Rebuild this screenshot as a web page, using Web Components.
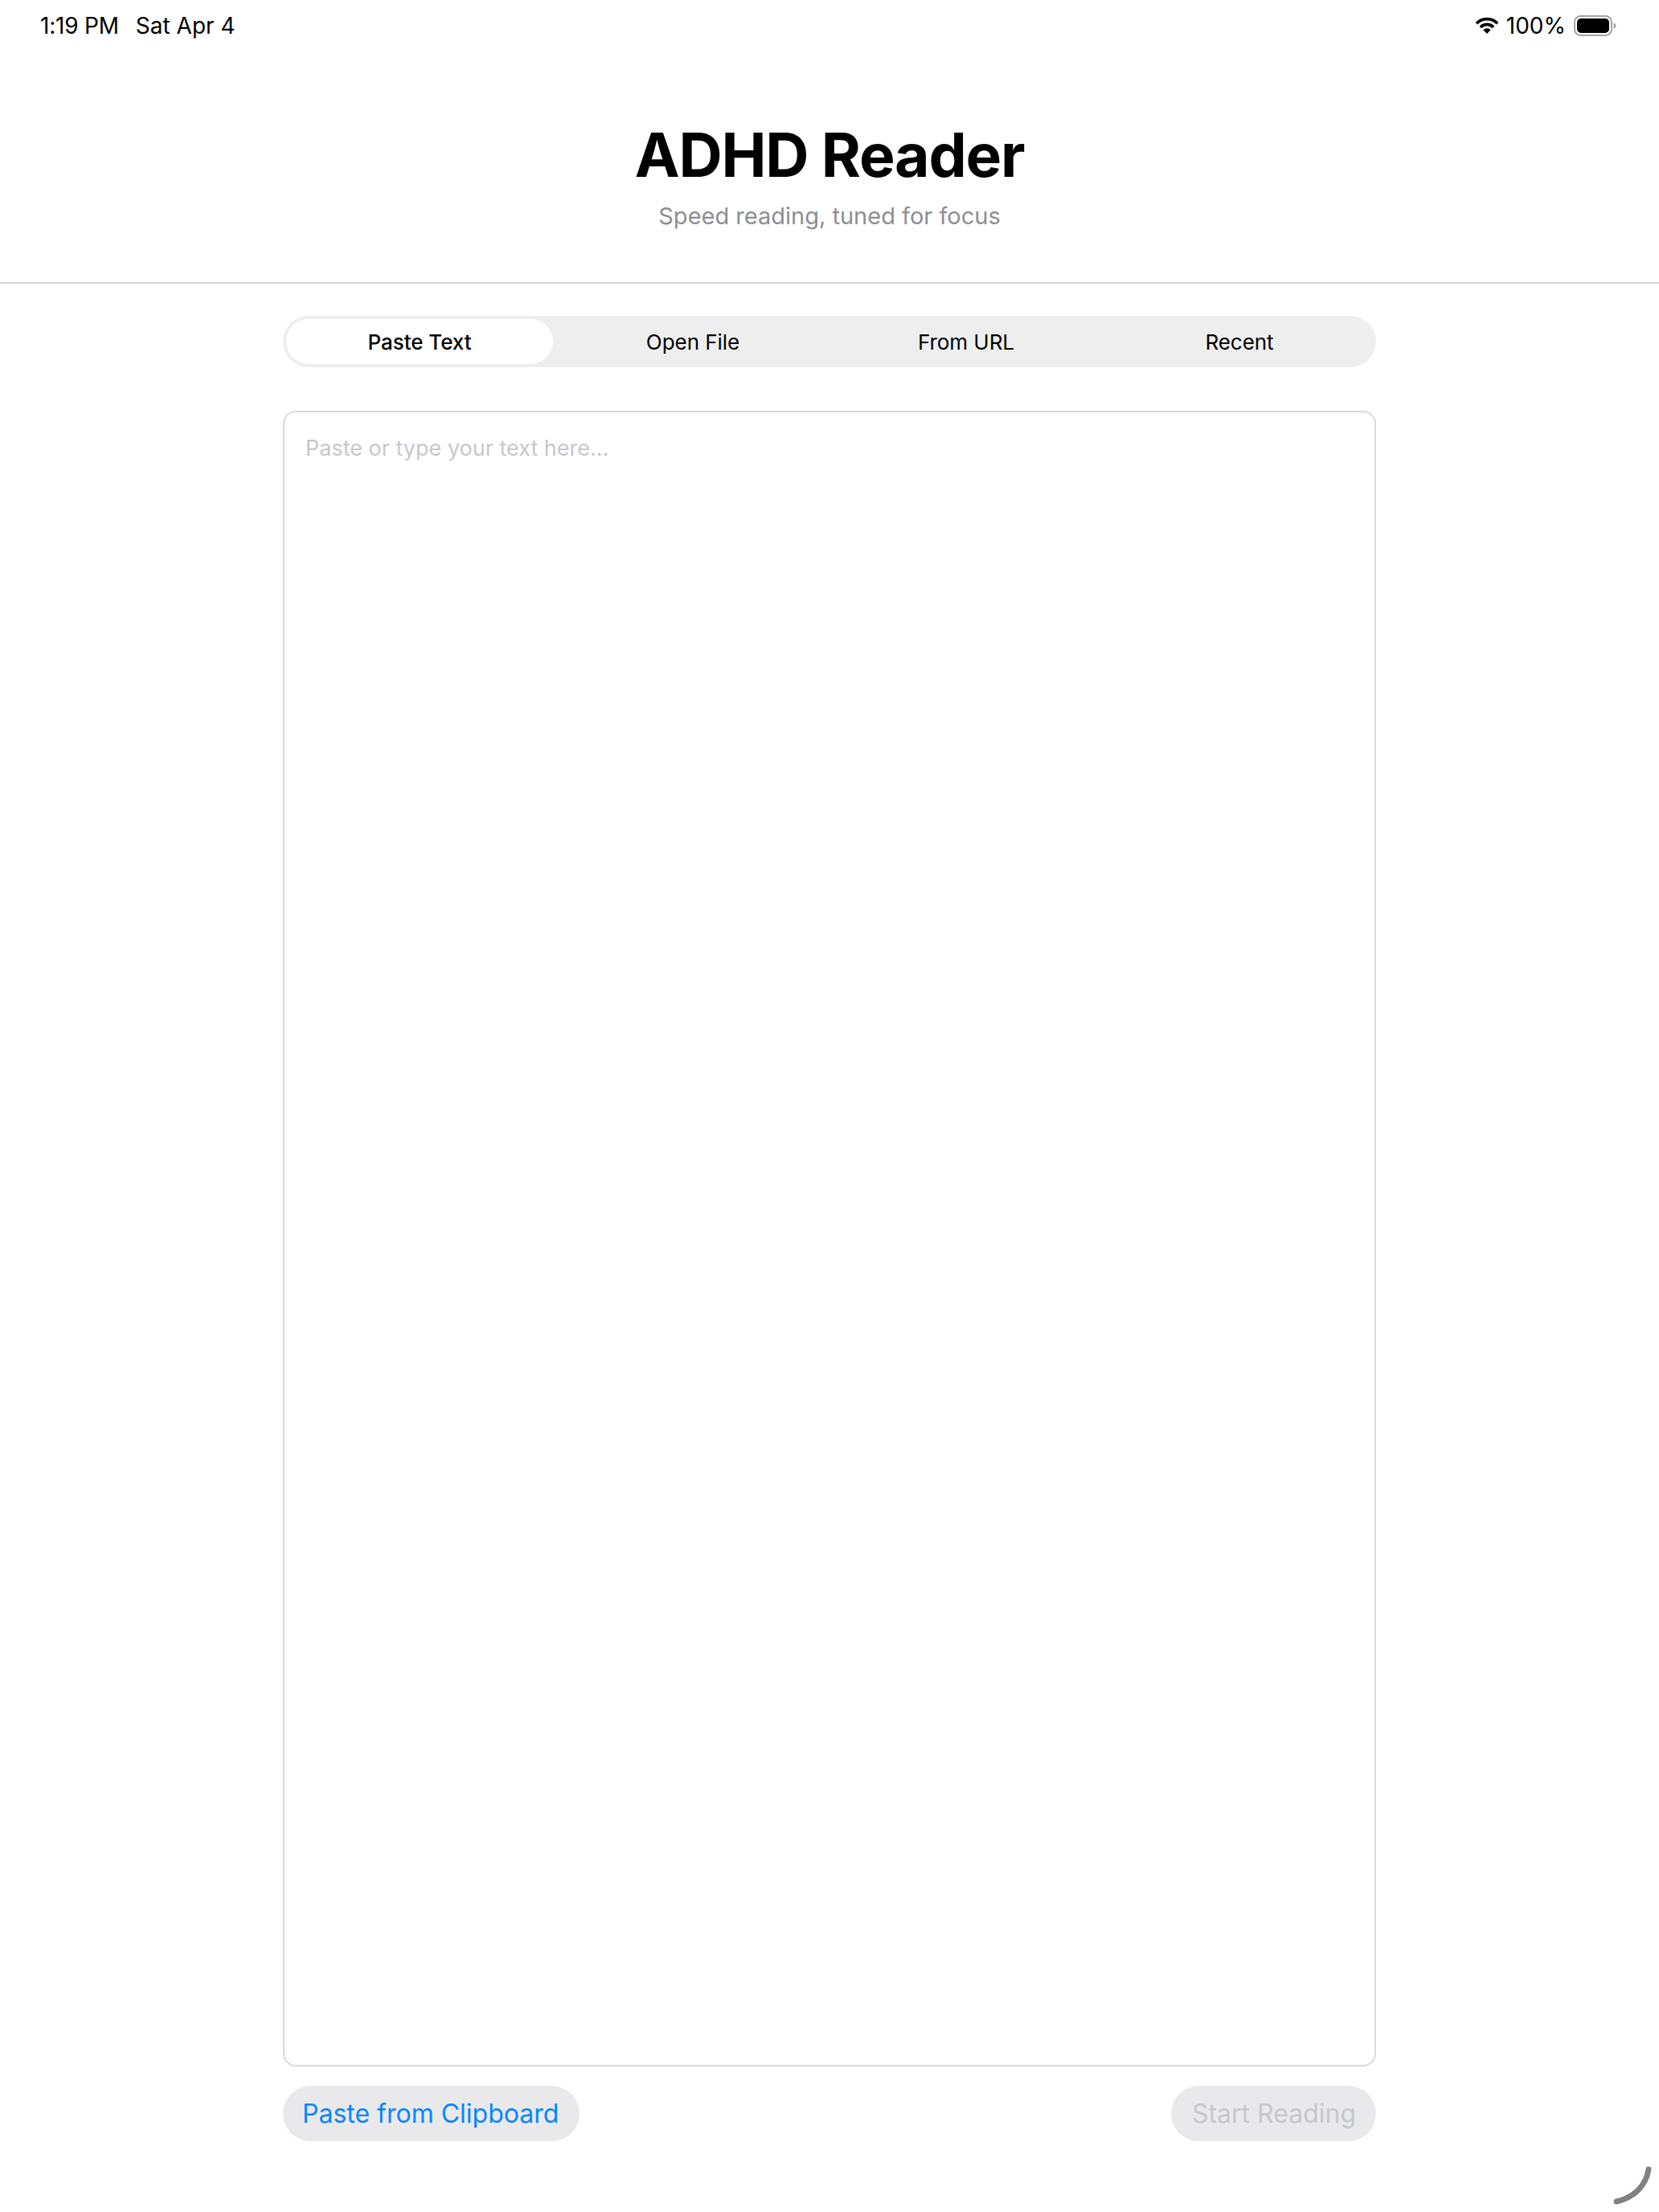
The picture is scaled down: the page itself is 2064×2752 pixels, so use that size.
<!DOCTYPE html>
<html>
<head>
<meta charset="utf-8">
<title>ADHD Reader</title>
<style>
  html, body { margin: 0; padding: 0; background: #fff; }
  body { width: 2064px; height: 2752px; overflow: hidden; font-family: Inter, "Liberation Sans", sans-serif; color: #000; }
</style>
</head>
<body>
<reader-app>
  <status-bar time="1:19 PM" date="Sat Apr 4" battery="100%"></status-bar>
  <app-header heading="ADHD Reader">Speed reading, tuned for focus</app-header>
  <reader-content>
    <tab-bar>
      <tab-item selected>Paste Text</tab-item>
      <tab-item>Open File</tab-item>
      <tab-item>From URL</tab-item>
      <tab-item>Recent</tab-item>
    </tab-bar>
    <text-box>Paste or type your text here...</text-box>
    <action-row>
      <pill-button>Paste from Clipboard</pill-button>
      <pill-button disabled>Start Reading</pill-button>
    </action-row>
  </reader-content>
  <corner-grip></corner-grip>
</reader-app>

<script>
class ReaderApp extends HTMLElement {
  constructor() {
    super();
    this.attachShadow({ mode: 'open' });
    this.shadowRoot.innerHTML = `
      <style>
        :host { display: flex; flex-direction: column; position: relative; width: 2064px; height: 2752px; }
      </style>
      <slot></slot>`;
  }
}

class StatusBar extends HTMLElement {
  constructor() {
    super();
    this.attachShadow({ mode: 'open' });
  }

  connectedCallback() {
    this.shadowRoot.innerHTML = `
      <style>
        :host { display: flex; justify-content: space-between; align-items: center; height: 64px; padding: 0 52px 0 50px; font-size: 28px; }
        .side { display: flex; align-items: center; }
        .time { letter-spacing: -0.2px; }
        .date { margin-left: 21px; }
        .pct { margin: 0 10px 0 8px; }
        svg { display: block; }
      </style>
      <div class="side">
        <span class="time">${this.getAttribute('time')}</span>
        <span class="date">${this.getAttribute('date')}</span>
      </div>
      <div class="side">
        <svg width="32" height="22" viewBox="0 0 30 21">
          <path d="M2.57 7.9A17 17 0 0 1 27.43 7.9M7.32 12.34A10.5 10.5 0 0 1 22.68 12.34" fill="none" stroke="#000" stroke-width="3.6"/>
          <path d="M15 20 10.61 15.41A6 6 0 0 1 19.39 15.41Z" fill="#000"/>
        </svg>
        <span class="pct">${this.getAttribute('battery')}</span>
        <svg width="54" height="26" viewBox="0 0 54 26">
          <rect x="1" y="1" width="46" height="24" rx="7.5" fill="none" stroke="#a3a3a3" stroke-width="2"/>
          <rect x="4" y="4" width="40" height="18" rx="5" fill="#000"/>
          <path d="M49.5 9.5C51.5 10 52.5 11.4 52.5 13S51.5 16 49.5 16.500Z" fill="#a3a3a3"/>
        </svg>
      </div>`;
  }
}

class AppHeader extends HTMLElement {
  constructor() {
    super();
    this.attachShadow({ mode: 'open' });
  }

  connectedCallback() {
    this.shadowRoot.innerHTML = `
      <style>
        :host { display: flex; flex-direction: column; align-items: center; height: 287px; border-bottom: 2px solid #d6d6d8; }
        h1 { margin: 89px 0 0; font-size: 75px; line-height: 80px; font-weight: 700; letter-spacing: -1.2px; color: #000; }
        p { margin: 16px 0 0; font-size: 29px; line-height: 40px; color: #8e8e93; }
      </style>
      <h1>${this.getAttribute('heading')}</h1>
      <p><slot></slot></p>`;
  }
}

class ReaderContent extends HTMLElement {
  constructor() {
    super();
    this.attachShadow({ mode: 'open' });
    this.shadowRoot.innerHTML = `
      <style>
        :host { display: flex; flex-direction: column; width: 1360px; margin: 0 auto; padding-top: 40px; }
      </style>
      <slot></slot>`;
  }
}

class TabBar extends HTMLElement {
  constructor() {
    super();
    this.attachShadow({ mode: 'open' });
    this.shadowRoot.innerHTML = `
      <style>
        :host { display: grid; grid-template-columns: repeat(4, 1fr); height: 64px; border-radius: 32px; background: #eeeeef; }
      </style>
      <slot></slot>`;
  }
}

class TabItem extends HTMLElement {
  constructor() {
    super();
    this.attachShadow({ mode: 'open' });
    this.shadowRoot.innerHTML = `
      <style>
        :host { display: flex; align-items: center; justify-content: center; margin: 4px; border-radius: 28px; font-size: 26px; letter-spacing: -0.05px; color: #000; }
        :host([selected]) { background: #fff; font-weight: 500; }
      </style>
      <slot></slot>`;
  }
}

class TextBox extends HTMLElement {
  constructor() {
    super();
    this.attachShadow({ mode: 'open' });
    this.shadowRoot.innerHTML = `
      <style>
        :host { display: block; box-sizing: border-box; height: 2060px; margin-top: 54px; padding: 27px 26px; border: 2px solid #dadadc; border-radius: 16px; background: #fff; font-size: 27px; line-height: 36px; color: #c7c7cc; }
      </style>
      <slot></slot>`;
  }
}

class ActionRow extends HTMLElement {
  constructor() {
    super();
    this.attachShadow({ mode: 'open' });
    this.shadowRoot.innerHTML = `
      <style>
        :host { display: flex; justify-content: space-between; margin-top: 24px; }
      </style>
      <slot></slot>`;
  }
}

class PillButton extends HTMLElement {
  constructor() {
    super();
    this.attachShadow({ mode: 'open' });
    this.shadowRoot.innerHTML = `
      <style>
        :host { display: flex; align-items: center; height: 69px; padding: 0 26px 0 24px; border-radius: 35px; background: #e9e9eb; font-size: 32px; color: #0a84ff; }
        :host([disabled]) { padding: 0 25px 0 26px; color: #c7c7cc; }
      </style>
      <slot></slot>`;
  }
}

class CornerGrip extends HTMLElement {
  constructor() {
    super();
    this.attachShadow({ mode: 'open' });
    this.shadowRoot.innerHTML = `
      <style>
        :host { position: absolute; right: 0; bottom: 0; width: 100px; height: 100px; }
        svg { display: block; }
      </style>
      <svg width="100" height="100" viewBox="0 0 100 100">
        <path d="M87 47C84 66 70 82 47 87" fill="none" stroke="#808080" stroke-width="7" stroke-linecap="round"/>
      </svg>`;
  }
}

customElements.define('reader-app', ReaderApp);
customElements.define('status-bar', StatusBar);
customElements.define('app-header', AppHeader);
customElements.define('reader-content', ReaderContent);
customElements.define('tab-bar', TabBar);
customElements.define('tab-item', TabItem);
customElements.define('text-box', TextBox);
customElements.define('action-row', ActionRow);
customElements.define('pill-button', PillButton);
customElements.define('corner-grip', CornerGrip);
</script>
</body>
</html>
